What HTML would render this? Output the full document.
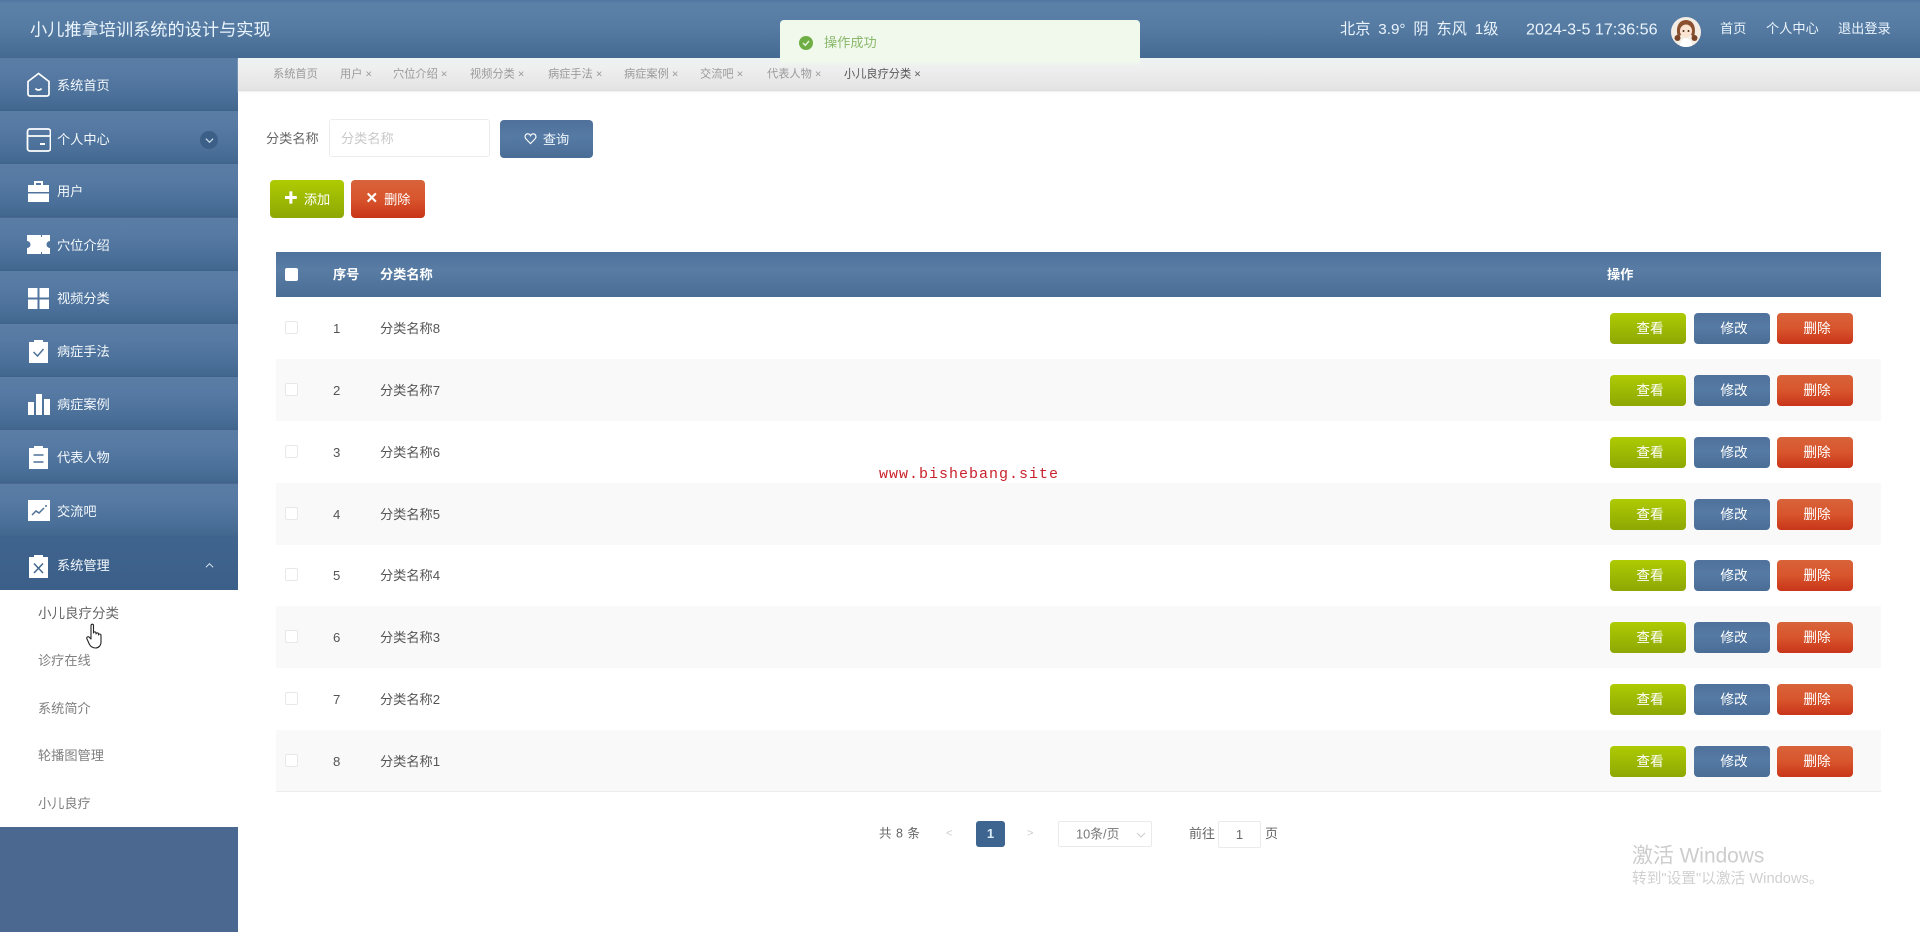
<!DOCTYPE html>
<html lang="zh"><head><meta charset="utf-8"><title>小儿推拿培训系统的设计与实现</title>
<style>
*{box-sizing:border-box;margin:0;padding:0}
html,body{width:1920px;height:932px;overflow:hidden;background:#fff}
body{position:relative;font-family:"Liberation Sans","Noto Sans CJK SC",sans-serif;font-size:13.2px;color:#555}
.a{position:absolute;white-space:nowrap}
.t{position:absolute;white-space:nowrap;transform:translateY(-50%);line-height:1.2}
#hd{position:absolute;left:0;top:0;width:1920px;height:58px;background:linear-gradient(#4f76a0 0,#5a80a8 3px,#5a80a8 12px,#557aa2 30px,#446a92 100%)}
#hd .t{color:#eaf4fc}
.it{position:absolute;left:0;width:238px;height:53.2px;background:linear-gradient(#5a7da6 0,#567aa3 30%,#4a6f98 75%,#436890 96%,#3f618a 100%)}
.it.on{background:linear-gradient(#3f648e,#3b5f89)}
.it svg{position:absolute;left:26px;top:13px;width:25px;height:25px;fill:#fff}
.it span{position:absolute;left:57px;top:50%;transform:translateY(-50%);color:#f3f8fc;line-height:1.2;margin-top:1px}
#sub{position:absolute;left:0;top:590px;width:238px;height:237px;background:#fff}
#tabs{position:absolute;left:238px;top:58px;width:1682px;height:33px;background:linear-gradient(#eef2f3 0,#eeeeee 35%,#e4e4e4 92%,#dedede 100%);box-shadow:0 1px 1px #eee}
.tb{position:absolute;top:75px;transform:translateY(-50%);font-size:11.2px;color:#9a9a9a;white-space:nowrap;line-height:1.2}
.btn{position:absolute;border-radius:4px;color:#fff;display:flex;align-items:center;justify-content:center;white-space:nowrap;padding-bottom:2px}
.g{background:linear-gradient(#aecb02,#8ea704)}
.b{background:linear-gradient(#4f719c,#557aa3 45%,#4a6d96)}
.r{background:linear-gradient(#d8633a,#d8552d 50%,#c93519)}
.row{position:absolute;left:276px;width:1605px;height:62px}
.row.z{background:#f9f9f9}
.row.l{border-bottom:1px solid #ececec}
.row .cb{position:absolute;left:9px;top:24px;width:13px;height:13px;border:1px solid #e8e8e8;border-radius:2px;background:#fff}
.row .n{position:absolute;left:57px;top:50%;transform:translateY(-50%);line-height:1.2;margin-top:1px}
.row .c{position:absolute;left:104px;top:50%;transform:translateY(-50%);line-height:1.2;white-space:nowrap;margin-top:1px}
.row .btn{top:15.5px;width:76px;height:31px;padding-left:4px;font-size:13.600px}
.v{left:1334px}.e{left:1418px}.d{left:1501px}
</style></head><body>

<div id="hd">
<div class="t" style="left:30px;top:30px;font-size:17.2px">小儿推拿培训系统的设计与实现</div>
<div class="t" style="left:1340px;top:30px;font-size:15.200px;word-spacing:3.700px">北京 3.9° 阴 东风 1级</div>
<div class="t" style="left:1526px;top:30px;font-size:16.100px">2024-3-5 17:36:56</div>
<div class="a" style="left:1671px;top:17px;width:30px;height:30px;border-radius:50%;overflow:hidden">
<svg width="30" height="30" viewBox="0 0 30 30"><rect width="30" height="30" fill="#f4ede4"/><path d="M7 20C4 10 8 3 15 3s11 7 8 17l-3-2c1-5-1-8-5-9-3 2-6 4-5 9z" fill="#8a5030"/><ellipse cx="15" cy="14" rx="6" ry="6.500" fill="#fbe3d2"/><circle cx="12.500" cy="14" r="1" fill="#4a2a18"/><circle cx="17.500" cy="14" r="1" fill="#4a2a18"/><circle cx="6.500" cy="21" r="3" fill="#7a4528"/><circle cx="23.500" cy="21" r="3" fill="#7a4528"/><path d="M9 30c0-6 3-9 6-9s6 3 6 9z" fill="#fff"/></svg></div>
<div class="t" style="left:1720px;top:29px">首页</div>
<div class="t" style="left:1766px;top:29px">个人中心</div>
<div class="t" style="left:1838px;top:29px">退出登录</div>
</div>

<div class="a" style="left:0;top:58px;width:238px;height:874px;background:#4a6890"></div>

<div class="it" style="top:58px"><svg viewBox="0 0 25 25" style="top:14px"><path d="M12.500 1.500 2 9.500V22a2 2 0 0 0 2 2h17a2 2 0 0 0 2-2V9.500z" fill="none" stroke="#fff" stroke-width="1.700"/><path d="M9.500 16.500c1.500 2 4.500 2 6 0" fill="none" stroke="#fff" stroke-width="1.800"/></svg><span>系统首页</span></div>
<div class="it" style="top:111px"><svg viewBox="0 0 25 25" style="top:17px"><rect x="1.500" y="1" width="23" height="22" rx="2.500" fill="none" stroke="#fff" stroke-width="1.800"/><path d="M1.500 8h23" stroke="#fff" stroke-width="1.800"/><path d="M14 16h5" stroke="#fff" stroke-width="2"/></svg><span style="margin-top:2px">个人中心</span>
<i class="a" style="left:200px;top:20px;width:18px;height:18px;border-radius:50%;background:#3c5f88"></i><svg viewBox="0 0 10 10" style="left:205px;top:25px;width:9px;height:9px"><path d="M1 3l4 4 4-4" fill="none" stroke="#cfe0ef" stroke-width="1.300"/></svg></div>
<div class="it" style="top:164px"><svg viewBox="0 0 25 25" style="top:15px"><path d="M8 2h9v4h-2V4h-5v2H8z"/><rect x="2" y="6" width="21" height="7"/><rect x="2" y="14.500" width="21" height="8.500"/></svg><span>用户</span></div>
<div class="it" style="top:218px"><svg viewBox="0 0 25 25" style="top:14px"><path d="M1 3h14v2h1V3h8v6a3.500 3.500 0 0 0 0 7v6h-8v-2h-1v2H1v-6a3.500 3.500 0 0 0 0-7z"/></svg><span>穴位介绍</span></div>
<div class="it" style="top:271px"><svg viewBox="0 0 25 25" style="top:15px"><rect x="2" y="2" width="9.500" height="9.500"/><rect x="13.500" y="2" width="9.500" height="9.500"/><rect x="2" y="13.500" width="9.500" height="9.500"/><rect x="13.500" y="13.500" width="9.500" height="9.500"/></svg><span>视频分类</span></div>
<div class="it" style="top:324px"><svg viewBox="0 0 25 25" style="top:14px"><path d="M3 4h5V2h9v2h5v21H3z"/><path d="M7.500 14l4 4 6-7" fill="none" stroke="#4f7299" stroke-width="1.500"/></svg><span>病症手法</span></div>
<div class="it" style="top:377px"><svg viewBox="0 0 25 25" style="top:15px"><rect x="2" y="10" width="6" height="13"/><rect x="10" y="2" width="6" height="21"/><rect x="18" y="7" width="6" height="16"/></svg><span>病症案例</span></div>
<div class="it" style="top:430px"><svg viewBox="0 0 25 25" style="top:14px"><path d="M3 4h5V2h9v2h5v21H3z"/><path d="M7.500 11h10M7.500 18h10" stroke="#4f7299" stroke-width="1.500"/></svg><span>代表人物</span></div>
<div class="it" style="top:484px"><svg viewBox="0 0 25 25" style="top:14px"><rect x="2" y="2" width="22" height="21"/><path d="M6 17l4-4 3 2 5-5" fill="none" stroke="#4f7299" stroke-width="1.500"/><circle cx="20" cy="8" r="1" fill="#4f7299"/></svg><span>交流吧</span></div>
<div class="it on" style="top:537px"><svg viewBox="0 0 25 25" style="top:16px"><path d="M3 4h5V2h9v2h5v21H3z"/><path d="M8 10.500l9 9.500M17 10.500l-9 9.500" stroke="#44678f" stroke-width="1.500"/></svg><span style="margin-top:2px">系统管理</span>
<svg viewBox="0 0 10 10" style="left:205px;top:24px;width:9px;height:9px"><path d="M1 7l4-4 4 4" fill="none" stroke="#e0ecf6" stroke-width="1.100"/></svg></div>

<div id="sub">
<div class="t" style="left:38px;top:24px;color:#666;font-size:13.500px">小儿良疗分类</div>
<div class="t" style="left:38px;top:71px;color:#808080">诊疗在线</div>
<div class="t" style="left:38px;top:119px;color:#808080">系统简介</div>
<div class="t" style="left:38px;top:166px;color:#808080">轮播图管理</div>
<div class="t" style="left:38px;top:214px;color:#808080">小儿良疗</div>
</div>
<svg class="a" style="left:86px;top:623px" width="19" height="26" viewBox="0 0 19 26"><path d="M5 2.500c0-1.800 2.500-1.800 2.500 0V10c0-1.500 2.500-1.500 2.500 0v1c0-1.500 2.500-1.500 2.500 0v1c0-1.400 2.500-1.400 2.500 0.500V19c0 3.500-2.500 6-5.500 6s-4.500-1-6-3.500L1 16c-1-2 1.200-3 2.500-1.500L5 16z" fill="#fff" stroke="#222" stroke-width="1.100" stroke-linejoin="round"/></svg>

<div id="tabs"></div>
<div class="tb" style="left:273px">系统首页</div>
<div class="tb" style="left:340px">用户 ×</div>
<div class="tb" style="left:393px">穴位介绍 ×</div>
<div class="tb" style="left:470px">视频分类 ×</div>
<div class="tb" style="left:548px">病症手法 ×</div>
<div class="tb" style="left:624px">病症案例 ×</div>
<div class="tb" style="left:700px">交流吧 ×</div>
<div class="tb" style="left:767px">代表人物 ×</div>
<div class="tb" style="left:844px;color:#555">小儿良疗分类 ×</div>

<div class="a" style="left:780px;top:20px;width:360px;height:46px;border-radius:4px 4px 0 0;background:linear-gradient(#f0f9eb 0,#f0f9eb 88%,rgba(240,249,235,.1) 100%)"></div>
<div class="a" style="left:799px;top:36px;width:14px;height:14px;border-radius:50%;background:#6fae45"></div>
<svg class="a" style="left:799px;top:36px" width="14" height="14" viewBox="0 0 14 14"><path d="M4 7l2.300 2.300L10 5" fill="none" stroke="#e8f5df" stroke-width="1.400"/></svg>
<div class="t" style="left:824px;top:43px;color:#8ab86c">操作成功</div>

<div class="t" style="left:266px;top:139px;color:#666">分类名称</div>
<div class="a" style="left:329px;top:119px;width:161px;height:38px;border:1px solid #ececec;border-radius:3px;background:#fff"></div>
<div class="t" style="left:341px;top:139px;color:#c8c8c8">分类名称</div>
<div class="btn b" style="left:500px;top:120px;width:93px;height:38px;color:#eef5fb">
<svg width="13" height="13" viewBox="0 0 14 14" style="margin-right:6px"><path d="M7 12.500 2 7.300C.2 5.200 1.500 2 4 2c1.500 0 2.400.8 3 2 .6-1.200 1.500-2 3-2 2.500 0 3.800 3.200 2 5.300z" fill="none" stroke="#fff" stroke-width="1.200"/></svg>查询</div>
<div class="btn" style="left:270px;top:180px;width:74px;height:38px;background:linear-gradient(#aecb02,#8ea704)"><span style="font-weight:bold;font-size:14px;margin-right:6px;line-height:1">✚</span>添加</div>
<div class="btn" style="left:351px;top:180px;width:74px;height:38px;background:linear-gradient(#d8633a,#d8552d 50%,#c93519)"><span style="font-size:15px;margin-right:6px;font-weight:bold;line-height:1">✕</span>删除</div>

<div class="a" style="left:276px;top:252px;width:1605px;height:45px;background:linear-gradient(#4f729e,#587ca4 40%,#4a6d95)"></div>
<div class="a" style="left:285px;top:268px;width:13px;height:13px;background:#fff;border-radius:2px"></div>
<div class="t" style="left:333px;top:275px;color:#fff;font-weight:bold">序号</div>
<div class="t" style="left:380px;top:275px;color:#fff;font-weight:bold">分类名称</div>
<div class="t" style="left:1607px;top:275px;color:#fff;font-weight:bold">操作</div>

<div class="row" style="top:297px"><i class="cb"></i><span class="n">1</span><span class="c">分类名称8</span><div class="btn g v">查看</div><div class="btn b e">修改</div><div class="btn r d">删除</div></div>
<div class="row z" style="top:359px"><i class="cb"></i><span class="n">2</span><span class="c">分类名称7</span><div class="btn g v">查看</div><div class="btn b e">修改</div><div class="btn r d">删除</div></div>
<div class="row" style="top:421px"><i class="cb"></i><span class="n">3</span><span class="c">分类名称6</span><div class="btn g v">查看</div><div class="btn b e">修改</div><div class="btn r d">删除</div></div>
<div class="row z" style="top:483px"><i class="cb"></i><span class="n">4</span><span class="c">分类名称5</span><div class="btn g v">查看</div><div class="btn b e">修改</div><div class="btn r d">删除</div></div>
<div class="row" style="top:544px"><i class="cb"></i><span class="n">5</span><span class="c">分类名称4</span><div class="btn g v">查看</div><div class="btn b e">修改</div><div class="btn r d">删除</div></div>
<div class="row z" style="top:606px"><i class="cb"></i><span class="n">6</span><span class="c">分类名称3</span><div class="btn g v">查看</div><div class="btn b e">修改</div><div class="btn r d">删除</div></div>
<div class="row" style="top:668px"><i class="cb"></i><span class="n">7</span><span class="c">分类名称2</span><div class="btn g v">查看</div><div class="btn b e">修改</div><div class="btn r d">删除</div></div>
<div class="row z l" style="top:730px"><i class="cb"></i><span class="n">8</span><span class="c">分类名称1</span><div class="btn g v">查看</div><div class="btn b e">修改</div><div class="btn r d">删除</div></div>

<div class="t" style="left:879px;top:834px;font-size:12.500px;color:#666;word-spacing:1px">共 8 条</div>
<div class="t" style="left:946px;top:834px;font-size:11px;color:#ccc">&lt;</div>
<div class="a" style="left:976px;top:821px;width:29px;height:26px;background:#3e6590;border-radius:3px;color:#dcecf8;font-weight:bold;font-size:13px;line-height:26px;text-align:center">1</div>
<div class="t" style="left:1027px;top:834px;font-size:11px;color:#ccc">&gt;</div>
<div class="a" style="left:1058px;top:821px;width:94px;height:26px;border:1px solid #eaeaea;border-radius:2px"></div>
<div class="t" style="left:1076px;top:834px;font-size:12.800px;color:#777">10条/页</div>
<svg class="a" style="left:1136px;top:830px" width="10" height="10" viewBox="0 0 10 10"><path d="M1 3l4 4 4-4" fill="none" stroke="#ccc" stroke-width="1"/></svg>
<div class="t" style="left:1189px;top:834px;font-size:13px;color:#666">前往</div>
<div class="a" style="left:1218px;top:821px;width:43px;height:27px;border:1px solid #eaeaea;border-radius:2px;color:#666;font-size:13px;line-height:25px;text-align:center">1</div>
<div class="t" style="left:1265px;top:834px;font-size:13px;color:#666">页</div>

<div class="t" style="left:879px;top:475px;font-family:'Liberation Mono','DejaVu Sans Mono',monospace;font-size:15px;letter-spacing:1px;color:#c8232c">www.bishebang.site</div>
<div class="t" style="left:1632px;top:856px;font-size:20.900px;color:#cdcdcd">激活 Windows</div>
<div class="t" style="left:1632px;top:880px;font-size:14.700px;color:#d0d0d0">转到"设置"以激活 Windows。</div>
</body></html>
